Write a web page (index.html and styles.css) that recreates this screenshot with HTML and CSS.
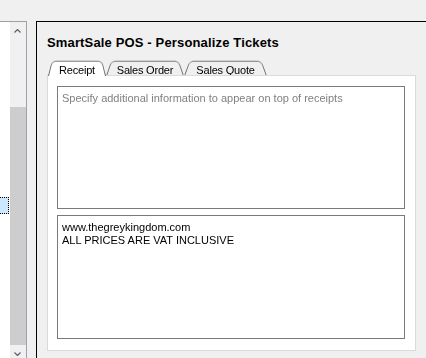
FILE: index.html
```html
<!DOCTYPE html>
<html lang="en">
<head>
  <meta charset="UTF-8">
  <meta name="viewport" content="width=device-width, initial-scale=1.0">
  <title>SmartSale POS - Personalize Tickets</title>
  <link rel="stylesheet" href="styles.css">
</head>
<body>
  <div class="window">
    <!-- 左侧导航列表 -->
    <aside class="list-pane">
      <div class="list">
        <div class="list-item selected"></div>
      </div>
      <div class="vscroll">
        <div class="scroll-btn">
          <svg width="7" height="4" viewBox="0 0 7 4"><path d="M0.5 3.5 L3.5 0.5 L6.5 3.5" fill="none" stroke="#606060" stroke-width="1.2"/></svg>
        </div>
        <div class="scroll-track"></div>
        <div class="scroll-thumb"></div>
        <div class="scroll-btn">
          <svg width="7" height="4" viewBox="0 0 7 4"><path d="M0.5 0.5 L3.5 3.5 L6.5 0.5" fill="none" stroke="#606060" stroke-width="1.2"/></svg>
        </div>
      </div>
    </aside>

    <!-- 设置面板 -->
    <main class="settings">
      <h1 class="title">SmartSale POS - Personalize Tickets</h1>

      <div class="tabs">
        <div class="tab active" style="width: 58px">Receipt</div>
        <div class="tab" style="width: 78px">Sales Order</div>
        <div class="tab" style="width: 83px">Sales Quote</div>
      </div>

      <div class="tab-panel">
        <textarea class="ticket-text header-text" placeholder="Specify additional information to appear on top of receipts"></textarea>
        <textarea class="ticket-text footer-text">www.thegreykingdom.com
ALL PRICES ARE VAT INCLUSIVE</textarea>
      </div>
    </main>
  </div>
</body>
</html>
```

FILE: styles.css
```css
/* 基础样式 */
* {
  margin: 0;
  padding: 0;
  box-sizing: border-box;
}

html, body {
  width: 426px;
  height: 358px;
  overflow: hidden;
}

body {
  background-color: #f0f0f0;
  color: #000;
  font-family: 'Liberation Sans', Arial, sans-serif;
  font-size: 11px;
}

.window {
  display: flex;
  height: 100%;
  padding-top: 21px;
}

/* 左侧列表 */
.list-pane {
  display: flex;
  width: 27px;
  margin-right: 9px;
  border-top: 1px solid #a0a0a0;
  border-right: 1px solid #a0a0b0;
  background: white;
  overflow: hidden;
}

.list {
  width: 10px;
}

.list-item.selected {
  width: 9px;
  height: 17px;
  margin-top: 175px;
  background-color: #cce8ff;
  border: 1px dotted #000;
  border-left: none;
}

.vscroll {
  width: 16px;
  display: flex;
  flex-direction: column;
  background-color: #f0f0f0;
}

.scroll-btn {
  height: 17px;
  flex: none;
  display: flex;
  justify-content: center;
  align-items: center;
  padding-right: 1px;
}

.scroll-track {
  height: 68px;
  flex: none;
}

.scroll-thumb {
  height: 238px;
  flex: none;
  background-color: #cdcdcd;
}

/* 设置面板 */
.settings {
  flex: 1;
  border-left: 1px solid #000;
  border-top: 1px solid #000;
  padding: 13px 0 0 10px;
}

.title {
  font-size: 13px;
  font-weight: bold;
  letter-spacing: 0.15px;
  line-height: 16px;
  color: #000;
}

.tabs {
  display: flex;
  margin: 10px 0 0 1px;
  height: 15px;
}

.tab {
  position: relative;
  z-index: 0;
  height: 15px;
  line-height: 15px;
  text-align: center;
  padding-top: 2px;
  letter-spacing: -0.2px;
  white-space: nowrap;
}

.tab::before {
  content: '';
  position: absolute;
  top: 0;
  left: 0;
  right: 0;
  bottom: 0;
  z-index: -1;
  background-color: #f0f0f0;
  border: 1px solid #6e6e6e;
  border-bottom: none;
  border-radius: 5px 5px 0 0;
  transform: scaleY(1.2) perspective(20px) rotateX(12deg);
  transform-origin: center bottom;
}

.tab.active {
  z-index: 2;
}

.tab.active::before {
  background-color: white;
}

.tab-panel {
  position: relative;
  z-index: 1;
  width: 369px;
  height: 276px;
  margin-top: -1px;
  padding: 10px 10px 11px 9px;
  background-color: white;
  border: 1px solid #dadada;
  display: flex;
  flex-direction: column;
  gap: 6px;
}

.ticket-text {
  display: block;
  width: 348px;
  border: 1px solid #7a7a7a;
  padding: 5px 4px;
  font-family: 'Liberation Sans', Arial, sans-serif;
  font-size: 11px;
  line-height: 13px;
  color: #000;
  resize: none;
  overflow: hidden;
  outline: none;
}

.ticket-text::placeholder {
  color: #808080;
}

.header-text {
  height: 123px;
}

.footer-text {
  height: 124px;
}
```
